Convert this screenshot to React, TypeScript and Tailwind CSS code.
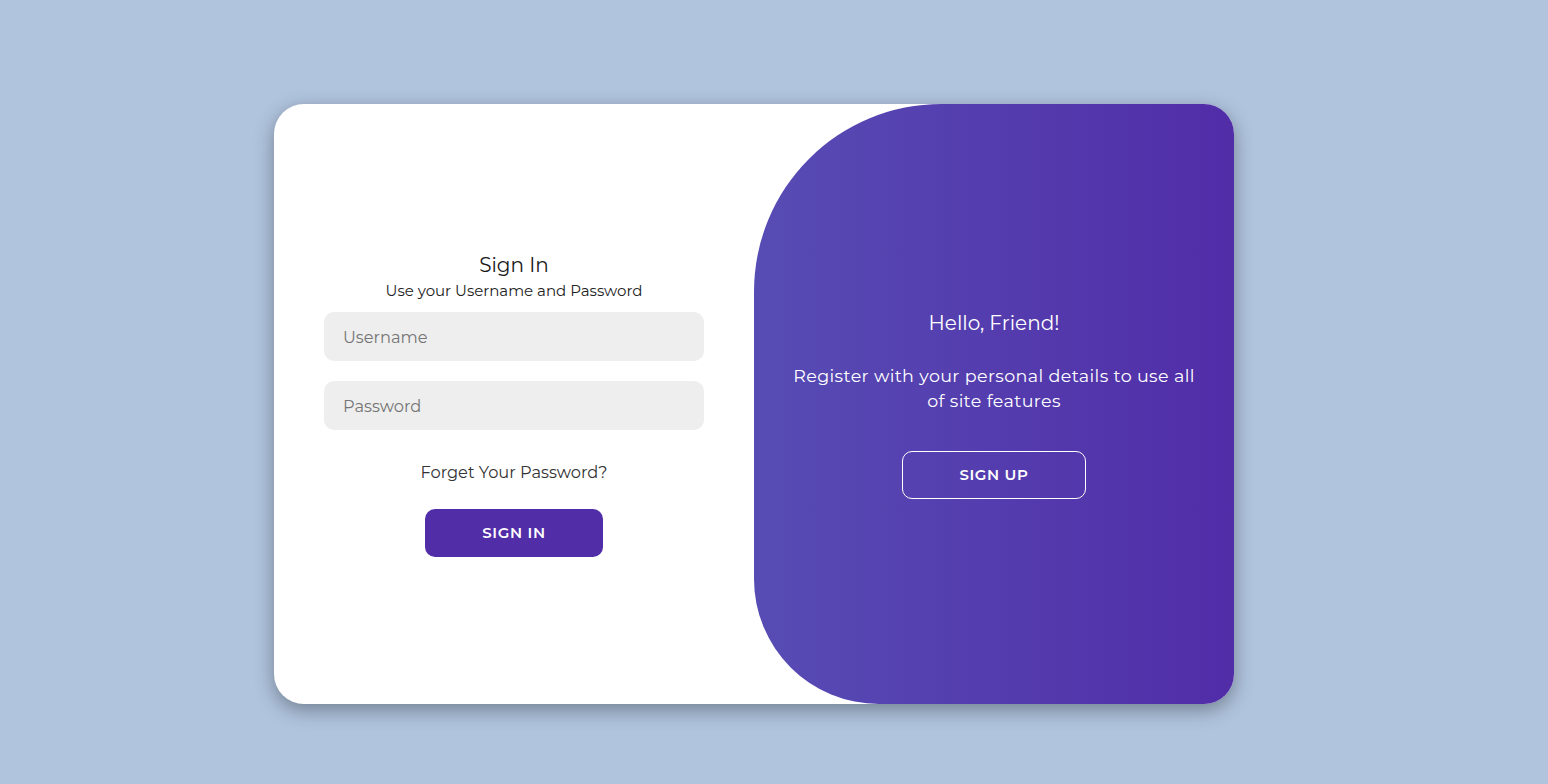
import React from "react";

export default function App() {
  return (
    <div
      className="w-full h-[784px] bg-[#b0c4de] overflow-hidden"
      style={{ fontFamily: "Montserrat, Inter, 'Open Sans', sans-serif" }}
    >
      <div className="pt-[104px] pl-[274px]">
        <div className="w-[960px] h-[600px] bg-white rounded-[30px] overflow-hidden flex shadow-[0_6px_19px_rgba(0,0,0,0.35)]">
          <div className="w-1/2 flex flex-col items-center justify-center px-[50px] pt-[2px]">
            <h1 className="text-[20px] leading-[24px] text-[#1a1a1a] font-normal">Sign In</h1>
            <span className="mt-[4px] text-[15px] leading-[20px] text-[#222]">Use your Username and Password</span>
            <input
              className="mt-[11px] w-full h-[49px] rounded-[10px] bg-[#eeeeee] px-[19px] text-[16.25px] outline-none placeholder:text-[#757575]"
              placeholder="Username"
            />
            <input
              className="mt-[20px] w-full h-[49px] rounded-[10px] bg-[#eeeeee] px-[19px] text-[16.25px] outline-none placeholder:text-[#757575]"
              placeholder="Password"
              type="password"
            />
            <a className="mt-[31px] text-[16.25px] leading-[22px] text-[#333]">Forget Your Password?</a>
            <button className="mt-[26px] w-[178px] h-[48px] rounded-[10px] bg-[#512da8] text-white text-[15px] font-semibold tracking-[0.625px] uppercase">
              Sign In
            </button>
          </div>
          <div className="w-1/2 rounded-tl-[187.5px] rounded-bl-[125px] bg-[linear-gradient(to_right,#574cb4,#512da8)] flex flex-col items-center justify-center px-[37.5px] pt-[2px] text-white text-center">
            <h1 className="text-[20px] leading-[24px] font-normal">Hello, Friend!</h1>
            <p className="mt-[27.5px] text-[17.5px] leading-[25px] tracking-[0.375px]">
              Register with your personal details to use all of site features
            </p>
            <button className="mt-[38.5px] w-[184px] h-[48px] rounded-[10px] border border-white text-white text-[15px] font-semibold tracking-[0.625px] uppercase">
              Sign Up
            </button>
          </div>
        </div>
      </div>
    </div>
  );
}
